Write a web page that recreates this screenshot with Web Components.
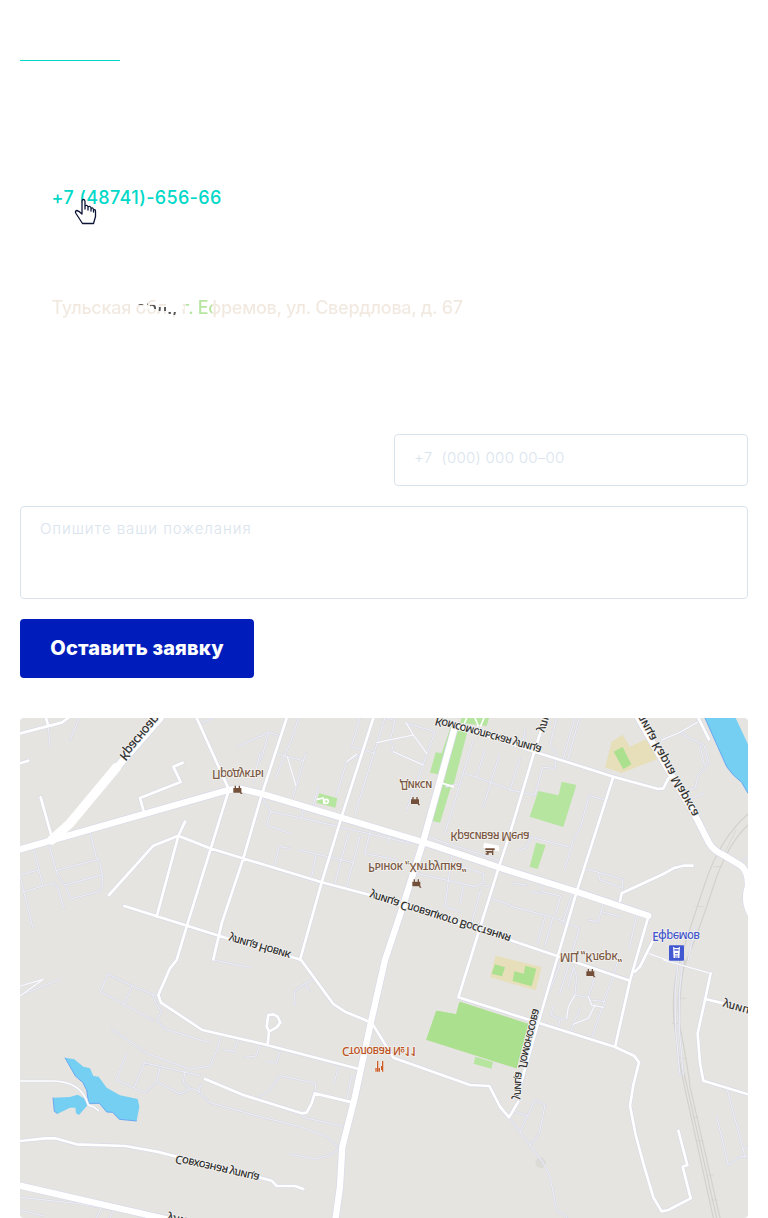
<!DOCTYPE html>
<html lang="ru">
<head>
<meta charset="utf-8">
<title>Контакты</title>
<style>
html,body{margin:0;background:#fff}
body{font-family:Inter,"Liberation Sans",sans-serif}
</style>
</head>
<body>
<contact-page></contact-page>

<template id="t-page">
<style>
:host{display:flex;flex-direction:column;box-sizing:border-box;width:768px;height:1218px;padding:60px 20px 0;overflow:hidden}
.rule{width:100px;height:1px;background:#00d8c8;flex:none}
phone-link{margin-top:124px}
address-line{margin-top:82px}
form{display:grid;grid-template-columns:354px 354px;gap:20px;margin:109px 0 40px}
.phone{grid-column:2;height:52px;letter-spacing:.28px}
.wish{grid-column:1 / 3;height:93px;letter-spacing:.95px;padding-top:11px}
</style>
<div class="rule"></div>
<phone-link>+7 (48741)-656-66</phone-link>
<address-line></address-line>
<form>
<form-field class="phone">+7&nbsp; (000) 000 00–00</form-field>
<form-field class="wish">Опишите ваши пожелания</form-field>
<submit-button>Оставить заявку</submit-button>
</form>
<city-map></city-map>
</template>

<template id="t-phone">
<style>
:host{display:block;position:relative;height:26px;padding-left:31.500px;flex:none}
a{color:#00d8c8;font:500 18px/26px Inter,sans-serif;letter-spacing:.34px;white-space:nowrap}
svg{position:absolute;left:54px;top:12px}
</style>
<a><slot></slot></a>
<svg width="24" height="28" viewBox="0 0 24 28"><path d="M8 17V4.500Q8 2.500 9.500 2.500T11 4.500V12V9Q13.500 7.500 14 10V13V10Q16.500 8.500 17 11V14V11.500Q19 10 19.500 12.500V15V13Q21.500 12 21.500 14.500V19.500L19.500 26.500H8.500L2 16.500Q.5 14 3 13.500Q5 14 8 17Z" fill="#fff" stroke="#0c1435" stroke-width="1.300" stroke-linejoin="round"/></svg>
</template>

<template id="t-address">
<style>
:host{display:block;height:32px;padding-left:31.500px;font:500 18px/30px Inter,sans-serif;letter-spacing:-.27px;white-space:nowrap;flex:none}
span{display:inline-block;height:32px;color:transparent;
background:
linear-gradient(#555,#555) 85px 10px/11px 2px no-repeat,
linear-gradient(#555,#555) 98px 12px/6px 4px no-repeat,
linear-gradient(#555,#555) 106px 14px/8px 4px no-repeat,
linear-gradient(#555,#555) 115px 19px/10px 3px no-repeat,
linear-gradient(#fff,#fff) 90px 13px/42px 3px no-repeat,
linear-gradient(90deg,#f1e9e0 134px,#b5e59f 134px 160px,#f1e9e0 160px);
-webkit-background-clip:text;background-clip:text}
</style>
<span>Тульская обл., г. Ефремов, ул. Свердлова, д. 67</span>
</template>

<template id="t-field">
<style>
:host{display:block;box-sizing:border-box;border:1px solid #d9e4ee;border-radius:4px;padding:12px 19px;color:#d9e4ee;font:300 15px/22px Inter,sans-serif;white-space:nowrap}
</style>
<slot></slot>
</template>

<template id="t-button">
<style>
:host{display:block;width:234px;height:59px}
button{width:100%;height:100%;padding:0;border:0;border-radius:4px;background:#001dbb;color:#fff;font:800 20px/59px Inter,sans-serif;letter-spacing:.16px;white-space:nowrap}
</style>
<button type="button"><slot></slot></button>
</template>

<template id="t-map">
<style>
:host{display:block;width:728px;height:500px;border-radius:4px;overflow:hidden;background:#e5e4e0;flex:none}
svg{display:block}
.r{fill:none;stroke-linejoin:round;stroke-linecap:round}
text{font:500 35px "Noto Sans",sans-serif;stroke:#f2f1ee;stroke-width:5px;paint-order:stroke;fill:#333}
.p{fill:#7b5944}
</style>
<svg width="728" height="500" viewBox="30 24 2184 1500">
<defs>
<g id="shop"><path d="M-13-4H-9V-11H-5V-4H3V-11H7V-4H11V9L15 14H9L7 10H-13Z" fill="#74503a" stroke="#f5f4f1" stroke-width="2" paint-order="stroke"/></g>
<path id="minor" d="M115 50L120 110M208 24L180 90M575 40L610 24M682 110L750 78M730 215L750 130M72 420L98 525M30 495L85 480M118 408L138 480 145 500 168 530 182 567 265 545 277 530 277 495 268 455 258 440 240 365M138 482L265 448M165 525L275 495M30 500L68 652M42 545L132 518 145 535 162 597
M750 80L775 67 810 77M775 67L758 135 750 150M865 24L850 75 798 200M798 130L878 152M887 130L850 260M1050 24L1025 110 1095 130M1050 135L1010 155 980 255M1125 24L1035 312M1130 24L1155 32 1140 95 1150 105 1145 125 1235 160M1190 40L1275 65 1190 300M925 230L910 285M755 260L782 305 770 345 840 370M782 305L880 325 1200 400M880 300L875 325M792 470L808 410 840 415M868 420L1030 458M918 435L905 500M1015 370L975 520M1050 380L1010 530M1082 360L1064 430 1160 450M1140 375L1135 400M1388 95L1305 370M1425 120L1400 200M1468 135L1420 290M1365 190L1500 238M1345 222L1308 230M1250 380L1465 450M1220 490L1395 530 1420 518 1420 490 1325 460M1325 435L1305 590 1350 605M1360 530L1350 580M1412 540L1385 640M1420 525L1445 530M1445 565L1500 585
M1545 60L1540 90M1530 145L1500 240 1575 255 1598 172 1635 175 1638 130 1620 105 1640 24M1695 24L1660 145M1708 24L1673 150M1785 270L1738 257 1710 355 1690 390 1663 480M1675 410L1565 382 1545 415 1525 420M1730 478L1765 487 1770 510 1838 535 1838 508 1765 487M1780 577L1765 635 1735 630M1775 605L1830 620M1880 615L1858 715M1600 515L1595 545 1652 558 1638 610M1690 540L1658 640M1565 545L1590 550M1500 588L1640 625 1708 655 1650 850M1605 620L1582 700M1628 625L1605 705M1510 520L1550 525M1955 90L2010 67 2040 85 2082 105 2097 160 2065 195 2055 235 2035 240M2045 265L2080 250M2070 105L2083 165M2010 67L2065 35M2055 650L2035 750M2195 455L2214 440
M610 750L718 772M30 856L150 808M293 792L360 825 440 858M293 792L272 845 428 930M365 830L342 885M428 855L435 875 455 905 440 930 465 957 598 998M305 957L410 1030 540 1078 600 1068 623 1015 632 978M683 990L672 1025 640 1020M748 1005L740 1038 705 1042M348 1032L320 1110 405 1148 440 1115 510 1152 545 1135 570 1145M405 1055L372 1133M402 1058L570 1097M450 1075L440 1115M525 1082L520 1118 540 1135M572 1125L565 1145 600 1178 750 1220 870 1250 950 1280 990 1315 960 1335 915 1347 840 1333M915 807L885 820 852 845 855 885M885 822L900 842M810 1025L800 1057 775 1055M985 1070L972 1120M915 1150L917 1120 810 1097 780 1140 750 1160M875 1210L880 1222 1005 1250M1040 1105L1025 1100 1010 1170
M1650 765L1620 840M1690 770L1700 800 1695 855 1675 890 1670 925 1650 930 1645 950M1690 775L1675 830M1695 855L1735 862 1755 800M1735 860L1745 885 1780 892M1740 870L1770 873 1785 875M1755 885L1735 925 1690 943 1710 895M1690 943L1683 965M1825 750L1745 985M1630 890L1622 915 1650 927M1500 1225L1560 1305 1600 1360 1620 1400 1640 1500 1670 1522M1505 1200L1550 1218M1530 1265L1575 1170 1605 1185 1588 1270 1560 1307M2120 1220L2155 1365 2190 1340 2214 1340M2152 1140L2205 1340M2195 1317L2214 1312M2005 750L1995 850 1997 960 2010 1095M2018 750L2008 850 2008 960 2020 1095
M30 1462L200 1480 440 1522M30 1500L100 1518M275 1490L260 1524M310 1500L300 1524"/>
<path id="mid" d="M30 70L155 38 175 24M108 24L115 48M30 160L55 152M92 262L125 380M518 158L490 170 512 216 390 264 400 300M560 24L655 235M655 245L530 650 500 750 480 775 445 855 453 878 577 960 750 1000 1050 1078M830 24L755 255 700 445 635 640 610 748M525 335L505 378 440 620M297 555L430 407 505 377 600 415 935 517 1080 555 1500 690 1860 812M343 588L660 688 873 749 970 882 1005 905 1085 938 1150 1043 1380 1125 1438 1128 1470 1190 1497 1222 1525 1175M1090 24L995 320 935 517 870 750M1605 24L1573 125 1500 370 1467 470 1380 750 1345 862 1585 938 1815 1011 1872 1037 1887 1057 1870 1125 1860 1187 1877 1275 1900 1360 1930 1462 1955 1504 1975 1500 2042 1465 2018 1370 2032 1365 2005 1262M1335 45L1573 125 1810 200 1945 237 1960 235 1975 205M1810 200L1700 545 1640 750 1585 938 1530 1130M1830 573L1835 550 1960 492 1990 475 2020 467 2048 467M1915 620L1860 812 1815 1011M1940 670L1905 740 1890 770 1875 785M2065 24L2097 88M773 1005L777 965 770 950 775 915 790 913 803 920 811 938 800 952 777 965M585 1107L700 1155 875 1210 890 1208 905 1180 914 1150 1030 1178M30 1293L105 1285 135 1285 200 1303 345 1308 440 1325 600 1365 750 1403 785 1412 800 1428 855 1428 880 1437M2102 790L2085 870 2063 970 2070 1060 2080 1112 2214 1153M2085 867L2140 880"/>
<path id="thin" d="M30 1113H130Q215 1115 235 1185L250 1190 265 1202"/>
<path id="path" d="M1100 98L1210 75 1188 38M1210 75L1250 130M1150 125L1240 165M1010 155L1040 133M832 140L858 228M1695 855L1675 890 1670 925M1735 860L1745 885 1780 892M1755 885L1735 925 1690 943M1955 90L2010 67 2065 35M1960 750L2102 790M1915 730L1970 750M30 828L100 808 30 858"/>
<path id="big" d="M30 418L122 392 655 240 690 236 750 250 1250 400 1500 483 1700 545 1915 617M1335 50L1238 400 1175 600 1125 750 1082 940 1035 1160 997 1310 990 1430 977 1524M1885 24L1940 120 2060 325 2095 395Q2110 422 2140 435L2190 465Q2215 480 2214 530Q2200 570 2220 610M30 1427L480 1530"/>
</defs>
<path fill="#b5e59f" d="M1322 50L1340 55 1298 195 1260 188 1277 127 1295 130ZM1340 60L1372 65 1330 228 1300 220ZM1298 222L1323 230 1290 338 1264 332ZM1355 24H1437L1430 48 1350 38ZM928 250L982 265 976 293 920 278ZM1585 243L1646 256 1655 215 1699 225 1660 351 1559 320ZM1578 398L1607 405 1583 477 1559 470ZM1396 1040L1449 1056 1444 1076 1391 1061Z"/>
<path fill="#e6dfb9" d="M1838 74L1859 110 1925 80 1940 148 1835 189 1785 172 1805 95ZM1457 737L1595 771 1577 841 1440 802Z"/>
<path fill="#abe08f" d="M1811 125L1838 111 1864 163 1840 178ZM1455 763L1485 772 1476 799 1445 791ZM1546 767L1579 776 1565 829 1508 813 1513 784 1541 791ZM1279 902L1340 913 1350 875 1555 942 1520 1075 1249 989Z"/>
<path fill="#abe08f" d="M1348 876L1555 942 1520 1075 1249 989 1279 902 1338 913Z"/>
<path fill="#75cff2" d="M2085 24H2177L2214 103V250L2195 217 2170 195 2150 170ZM165 1043L193 1048 220 1070 240 1075 250 1098 266 1100 290 1133 330 1156 383 1167 388 1190 380 1233 328 1228 308 1207 290 1206 268 1180 236 1180 230 1140 218 1117 196 1098ZM129 1163L180 1161 203 1154 222 1165 233 1185 207 1215 198 1210 196 1193 180 1193 143 1211 133 1204Z"/>
<path fill="none" stroke="#68a7f1" stroke-width="3" d="M2085 24L2150 170 2170 195 2195 217 2214 250M165 1043L196 1098 218 1117 230 1140 236 1180H268L290 1206 308 1207 328 1228 380 1233M129 1163L133 1204 143 1211"/>
<circle cx="1592" cy="1358" r="16" fill="#dcdbd5"/>
<g class="r" stroke="#d2d1cc" stroke-width="3.500"><path d="M2214 312Q2130 385 2085 520T2010 750T1995 960 2030 1160L2110 1524M2214 345Q2150 405 2110 530T2030 750T2012 960 2040 1130L2130 1524M2025 750Q1995 900 2020 1080L2120 1524"/><path stroke-width="2" d="M2143 430l35-70M2112 470l22 0M2057 588l25 3M2010 865l16 0M1987 940l18 0M2010 1045l14 0M2050 1222l15 0M2095 1395l14 0M2103 1470l18 0M2060 1292l18 0"/></g>
<g class="r"><use href="#minor" stroke="#d6d8e7" stroke-width="6"/><use href="#minor" stroke="#f0f0f4" stroke-width="2.800"/>
<use href="#path" stroke="#dcddea" stroke-width="6"/><use href="#path" stroke="#fbfbfc" stroke-width="3.500"/>
<use href="#thin" stroke="#d7d9e8" stroke-width="8"/><use href="#thin" stroke="#fff" stroke-width="5"/>
<use href="#mid" stroke="#d7d9e9" stroke-width="11.500"/><path d="M125 390L180 340 340 150 450 24" stroke="#d7d9e8" stroke-width="26"/><use href="#big" stroke="#d7d9e9" stroke-width="23"/>
<use href="#mid" stroke="#fff" stroke-width="8"/><use href="#big" stroke="#fff" stroke-width="19"/><path d="M125 390L180 340 340 150 450 24" stroke="#fff" stroke-width="22"/><path d="M125 390L180 340 320 172" stroke="#fff" stroke-width="28"/>
<path d="M1360 48L1370 24M1395 24L1405 48M1422 24L1412 48M922 268L940 264 942 280M1298 220L1330 230" stroke="#fff" stroke-width="5"/></g>
<circle cx="949" cy="274" r="6" fill="none" stroke="#fff" stroke-width="5"/>
<text class="p" transform="translate(606 180) scale(1 -1)" textLength="156">Продукты</text>
<text class="p" transform="translate(1169 213) scale(1 -1)" textLength="98">Дикси</text>
<text class="p" transform="translate(1321 365) scale(1 -1)" textLength="238">Красивая Меча</text>
<text class="p" transform="translate(1074 460) scale(1 -1)" textLength="295">Рынок „Хитрушка“</text>
<text class="p" transform="translate(1649 730) scale(1 -1)" textLength="187">МЦ „Клерк“</text>
<text transform="translate(996 1010) scale(1 -1)" textLength="225" style="fill:#bd5422">Столовая №11</text>
<text transform="translate(1927 667) scale(1 -1)" textLength="143" style="fill:#4455cc">Ефремов</text>
<text transform="translate(326 138) rotate(-50) scale(1 -1)" style="font-size:38px" textLength="166">Красноар</text>
<text transform="translate(1279 21) rotate(15.500) scale(1 -1)" textLength="330">Комсомольская улица</text>
<text transform="translate(2067 312) rotate(61) scale(1 -1)" text-anchor="end" style="font-size:36px">улица Карла Маркса</text>
<text transform="translate(1083 543) rotate(17.500) scale(1 -1)" textLength="443">улица Словацкого Восстания</text>
<text transform="translate(660 673) rotate(16) scale(1 -1)" textLength="192">улица Новик</text>
<text transform="translate(1512 1168) rotate(-87) scale(1 -1)" textLength="84">улица</text>
<text transform="translate(1525 1072) rotate(-76) scale(1 -1)" textLength="184">Ломоносова</text>
<text transform="translate(1585 63) rotate(-73) scale(1 -1)">ули</text>
<text transform="translate(499 1335) rotate(13) scale(1 -1)" textLength="258">Совхозная улица</text>
<text transform="translate(2142 871) rotate(16) scale(1 -1)">улица</text>
<text transform="translate(474 1512) rotate(12) scale(1 -1)">ули</text>
<use href="#shop" x="683" y="238"/><use href="#shop" x="1216" y="272"/><use href="#shop" x="1220" y="519"/><use href="#shop" x="1742" y="788"/>
<path d="M1422 398L1467 407V424L1420 414Z" fill="#fff"/>
<path d="M1426 415H1454V420H1450V435H1446V428H1436V434H1427V430H1431V427H1427V423H1447V420H1426Z" fill="#74503a"/>
<path d="M1103 1053V1085M1098 1074V1085M1108 1074V1085M1118 1053V1085" stroke="#f2f1ee" stroke-width="8"/>
<path d="M1103 1053V1085M1098 1074V1085M1108 1074V1085M1118 1053V1085M1115 1068V1080" stroke="#cc5d27" stroke-width="4"/>
<rect x="1977" y="706" width="45" height="46" rx="3" fill="#4158d0"/>
<path d="M1991 711L1993 744M2008 711L2006 744M1991 716H2008M1990 741H2009" stroke="#fff" stroke-width="3.500" fill="none"/><path d="M1991 722H2008V737H1991Z" fill="#fff"/><path d="M1995 731H2004" stroke="#4158d0" stroke-width="3"/>
</svg>
</template>

<script>
const define = (name, id) => customElements.define(name, class extends HTMLElement {
  constructor() {
    super();
    this.attachShadow({mode: 'open'}).append(document.getElementById(id).content.cloneNode(true));
  }
});
define('phone-link', 't-phone');
define('address-line', 't-address');
define('form-field', 't-field');
define('submit-button', 't-button');
define('city-map', 't-map');
define('contact-page', 't-page');
</script>
</body>
</html>
